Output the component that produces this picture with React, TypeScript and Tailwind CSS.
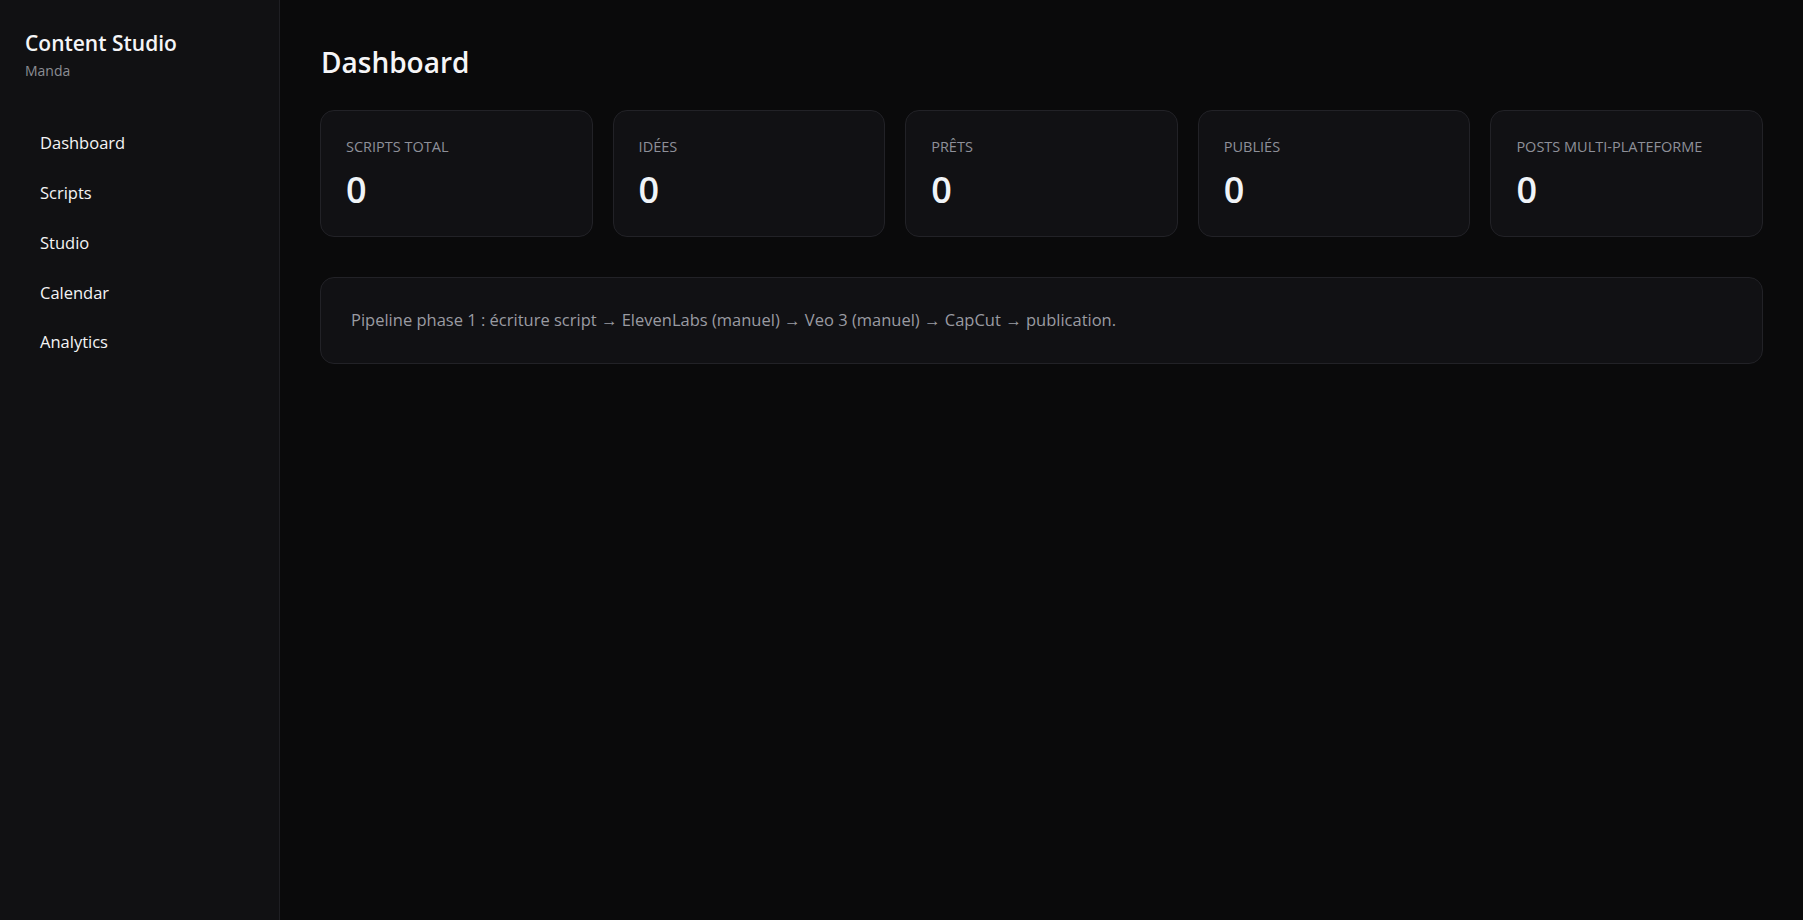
const navItems = ["Dashboard", "Scripts", "Studio", "Calendar", "Analytics"];

const stats = [
  { label: "Scripts total", value: 0 },
  { label: "Idées", value: 0 },
  { label: "Prêts", value: 0 },
  { label: "Publiés", value: 0 },
  { label: "Posts multi-plateforme", value: 0 },
];

export default function App() {
  return (
    <div
      className="flex min-h-screen bg-[#0a0a0b] text-[#f4f4f5]"
      style={{ fontFamily: '"Open Sans", "Noto Sans", sans-serif' }}
    >
      {/* Sidebar */}
      <aside className="w-[280px] shrink-0 bg-[#111113] border-r border-[#1f1f23] min-h-screen">
        <div className="px-[25px] pt-[29px]">
          <h1 className="text-[21px] font-semibold leading-[28px] text-[#f5f5f7]">Content Studio</h1>
          <p className="text-[14px] leading-[20px] text-[#8b8d94] mt-[4px]">Manda</p>
        </div>
        <nav className="mt-[38px] flex flex-col">
          {navItems.map((item) => (
            <a
              key={item}
              href="#"
              className="px-[40px] h-[49.7px] flex items-center text-[16.5px] text-[#f4f4f5]"
            >
              {item}
            </a>
          ))}
        </nav>
      </aside>

      {/* Main */}
      <main className="flex-1 px-[40px] pt-[42px]">
        <h2 className="text-[28px] font-semibold leading-[40px] text-[#f5f5f7] ml-[1px]">Dashboard</h2>

        <div className="grid grid-cols-5 gap-[20px] mt-[28px]">
          {stats.map((s) => (
            <div
              key={s.label}
              className="bg-[#111114] border border-[#222227] rounded-[14px] h-[127px] px-[25px] pt-[26px]"
            >
              <div className="text-[14.5px] uppercase leading-[20px] text-[#8e9099]">{s.label}</div>
              <div className="text-[36px] font-semibold leading-[44px] text-[#f0f4f8] mt-[11px]">{s.value}</div>
            </div>
          ))}
        </div>

        <div className="mt-[40px] bg-[#111114] border border-[#222227] rounded-[14px] h-[87px] px-[30px] flex items-center">
          <p className="text-[16.5px] text-[#9a9ba2]">
            Pipeline phase 1 : écriture script → ElevenLabs (manuel) → Veo 3 (manuel) → CapCut → publication.
          </p>
        </div>
      </main>
    </div>
  );
}
